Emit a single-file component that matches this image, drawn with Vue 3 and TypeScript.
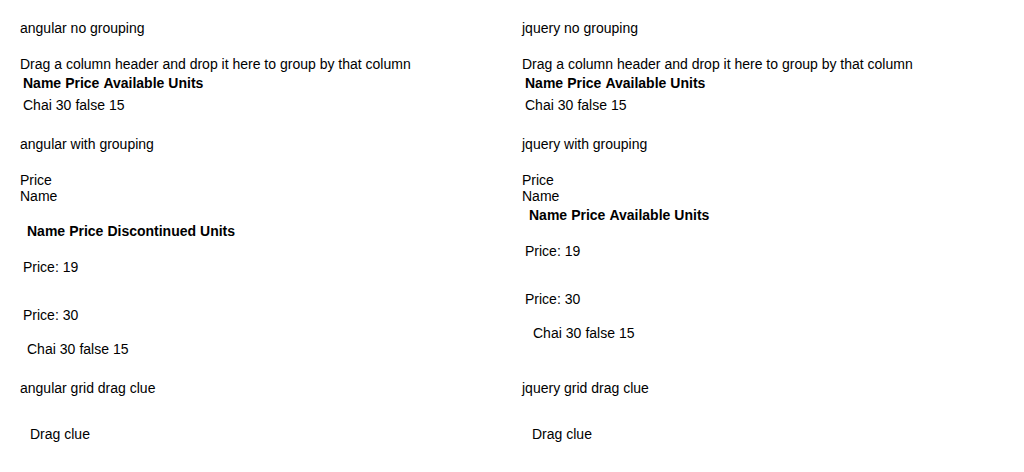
<script setup lang="ts">
interface Grid {
  framework: string
  headers: string[]
  groupedHeaders: string[]
  spaced: boolean
}

const row = ['Chai', '30', 'false', '15']
const available = ['Name', 'Price', 'Available', 'Units']

const grids: Grid[] = [
  { framework: 'angular', headers: available, groupedHeaders: ['Name', 'Price', 'Discontinued', 'Units'], spaced: true },
  { framework: 'jquery', headers: available, groupedHeaders: available, spaced: false },
]
</script>

<template>
  <main class="page">
    <div v-for="grid in grids" :key="grid.framework" class="column">
      <section>
        <p class="title">{{ grid.framework }} no grouping</p>
        <div>Drag a column header and drop it here to group by that column</div>
        <table class="table">
          <thead>
            <tr><th v-for="h in grid.headers" :key="h" scope="col">{{ h }}</th></tr>
          </thead>
          <tbody>
            <tr><td v-for="c in row" :key="c">{{ c }}</td></tr>
          </tbody>
        </table>
      </section>

      <section :class="{ spaced: grid.spaced }">
        <p class="title">{{ grid.framework }} with grouping</p>
        <div>Price</div>
        <div>Name</div>
        <table class="table">
          <thead>
            <tr class="head"><th v-for="h in grid.groupedHeaders" :key="h" scope="col">{{ h }}</th></tr>
          </thead>
          <tbody>
            <tr class="group"><td colspan="4">Price: 19</td></tr>
            <tr class="group"><td colspan="4">Price: 30</td></tr>
            <tr class="data"><td v-for="c in row" :key="c">{{ c }}</td></tr>
          </tbody>
        </table>
      </section>

      <section>
        <p class="title">{{ grid.framework }} grid drag clue</p>
        <div class="clue">Drag clue</div>
      </section>
    </div>
  </main>
</template>

<style>
body {
  margin: 0;
  background: #fff;
}
</style>

<style scoped>
.page {
  display: grid;
  grid-template-columns: 1fr 1fr;
  grid-template-rows: repeat(3, auto);
  gap: 20px;
  padding: 20px;
  color: #000;
  font: 14px/16px "Liberation Sans", Arial, sans-serif;
}
.column {
  display: grid;
  grid-row: span 3;
  grid-template-rows: subgrid;
}
.title {
  margin: 0 0 20px;
}
.table,
.table thead,
.table tbody {
  display: block;
}
.table tr {
  display: flex;
  gap: 4px;
  padding: 3px;
}
.table th,
.table td {
  padding: 0;
  text-align: left;
  white-space: nowrap;
}
.spaced .table {
  padding-top: 16px;
}
.table .head {
  padding-left: 7px;
}
.table .group {
  padding: 17px 3px 15px;
}
.table .data {
  padding-left: 11px;
}
.spaced .table .data {
  padding-left: 7px;
}
.clue {
  padding: 10px;
}
</style>
